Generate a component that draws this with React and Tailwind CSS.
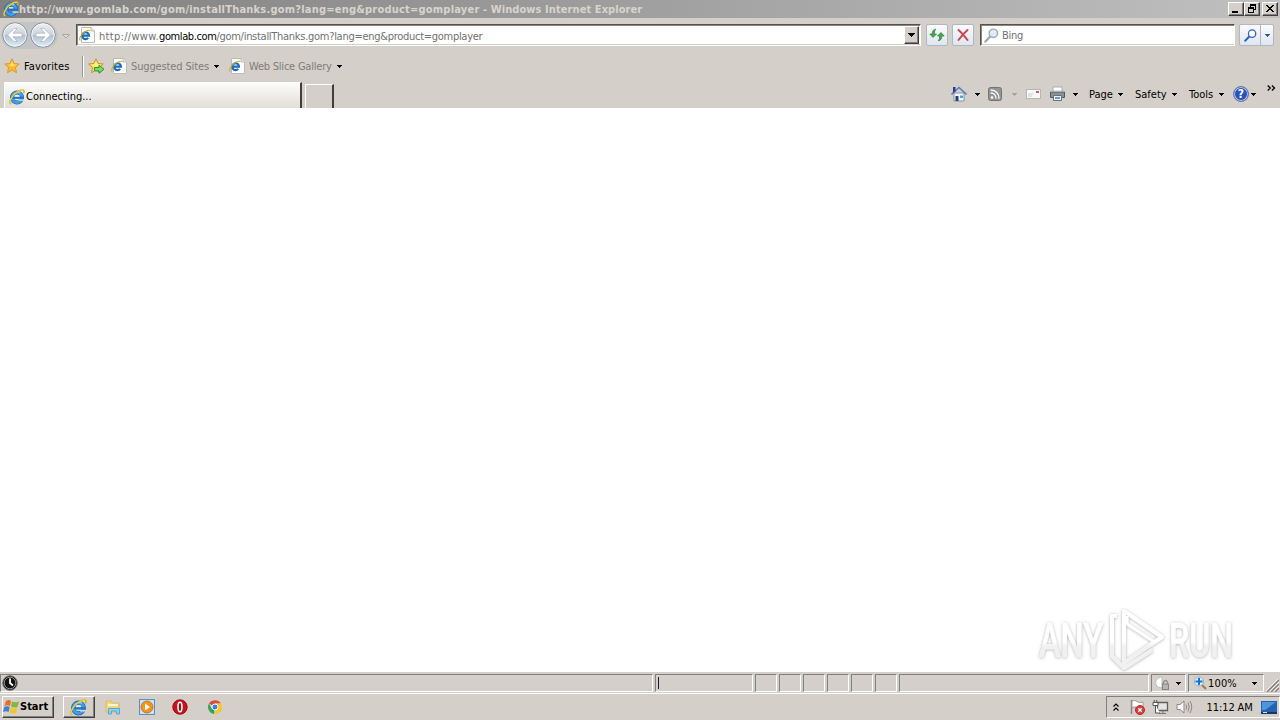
import React from "react";

const IE = ({ s = 16 }) => (
  <svg width={s} height={s} viewBox="0 0 16 16" className="block shrink-0">
    <circle cx="8" cy="8.500" r="5" fill="none" stroke="#1a5fb4" strokeWidth="4" />
    <circle cx="8" cy="8.500" r="5" fill="none" stroke="#3d9fe8" strokeWidth="2.800" />
    <path d="M9.500 10.300H15.500V11.800H9.500Z" fill="#dcd8d2" />
    <path d="M4.500 8.800H14.500" stroke="#1f74cc" strokeWidth="2.200" />
    <path d="M6 6.800H10.300" stroke="#e8f3fb" strokeWidth="1.300" />
    <path d="M4 5.500Q8 2 11.500 4" fill="none" stroke="#86cdf7" strokeWidth="1.200" />
    <path d="M2.200 15C.2 14.500 .6 11.500 2.700 8.300C5.500 4 11.500 .2 14.300 1.200C15.300 1.700 15.100 3 14.600 4.200" fill="none" stroke="#d3ae1f" strokeWidth="1.500" />
    <path d="M2.200 14.800C.5 14 .9 11.500 2.900 8.300C5.500 4.200 11.500 .6 14.300 1.500" fill="none" stroke="#f8e05a" strokeWidth=".8" />
  </svg>
);
const PageIE = () => (
  <svg width="16" height="16" viewBox="0 0 16 16" className="block shrink-0">
    <path d="M2.500.5H12L15.500 4V15.500H2.500Z" fill="#fff" stroke="#bdbbb6" />
    <path d="M12 .5V4H15.500" fill="#e6e6e6" stroke="#bdbbb6" />
    <path d="M3.500 8.600H10A3.400 3.400 0 1 0 9.200 10.900" fill="none" stroke="#1b6cc0" strokeWidth="2.100" />
    <path d="M1.300 13.500C-.4 12 2 8 4.500 5.800C7 3.500 10.500 2.500 11.200 3.800" fill="none" stroke="#cfae22" strokeWidth="1.100" />
  </svg>
);
const Caret = ({ c = "#000" }) => (
  <svg width="5" height="3" viewBox="0 0 5 3" className="block shrink-0" shapeRendering="crispEdges"><path d="M0 0H5V1H4V2H3V3H2V2H1V1H0Z" fill={c} /></svg>
);
const Star = ({ add }) => (
  <svg width="17" height="16" viewBox="0 0 17 16" className="block shrink-0">
    <path d="M8 .8 10.100 5.500 15.300 6 11.400 9.500 12.500 14.700 8 12 3.500 14.700 4.600 9.500.7 6 5.900 5.500Z" fill={add ? "#ffe45c" : "#fdbb2a"} stroke={add ? "#c8951c" : "#dd9a2e"} strokeWidth="1" />
    <path d="M8 3 9.300 6.400 13 6.800 8 8.500 4 6.800 6.800 6.400Z" fill="#fff0a0" opacity=".7" />
    {add && <path d="M6.500 9.500H11V7.200L16 11.200 11 15.200V12.900H6.500Z" fill="#7ed96c" stroke="#2f9336" />}
  </svg>
);
const Nav = ({ back, id }) => (
  <svg width="26" height="26" viewBox="0 0 26 26" className="block shrink-0">
    <defs><linearGradient id={id} x1="0" y1="0" x2="0" y2="1"><stop offset="0" stopColor="#eef0f3" /><stop offset=".48" stopColor="#ccd3dd" /><stop offset=".52" stopColor="#b2bfd0" /><stop offset="1" stopColor="#dff1fb" /></linearGradient></defs>
    <circle cx="13" cy="13" r="12.200" fill={`url(#${id})`} stroke="#858e9a" />
    <circle cx="13" cy="13" r="11.200" fill="none" stroke="#f4f7fa" />
    <path transform={back ? undefined : "matrix(-1 0 0 1 26 0)"} d="M5.500 13 12 6.500H15.300L11 11.200H20V14.800H11L15.300 19.500H12Z" fill="#fff" stroke="#9aa7b8" strokeWidth=".6" />
  </svg>
);
const Magnifier = ({ s, c, f }) => (
  <svg width={s} height={s} viewBox="0 0 16 16" className="block shrink-0">
    <path d="M1.500 14.500 6.500 9.200" stroke={c} strokeWidth="2.400" strokeLinecap="round" />
    <circle cx="10" cy="5.700" r="4.500" fill={f} stroke={c} strokeWidth="1.500" />
  </svg>
);

const RAISED = "border border-t-white border-l-white border-r-[#404040] border-b-[#404040] bg-[#d4cfc8] shadow-[inset_-1px_-1px_0_#808080]";
const SUNK = "border border-t-[#808080] border-l-[#808080] border-r-white border-b-white";
const FLAT = "border border-[#b0b7c2] rounded-[2px] bg-gradient-to-b from-[#fafbfd] to-[#dfe6f0]";

const WinButton = ({ children, className = "" }) => (
  <div className={`h-[14px] w-4 shrink-0 ${RAISED} ${className}`}>
    <svg width="14" height="12" viewBox="0 0 14 12" className="block" shapeRendering="crispEdges">{children}</svg>
  </div>
);

const TitleBar = () => (
  <div className="flex h-[18px] items-center bg-gradient-to-r from-[#808080] to-[#c0c0c0] pl-[3px]">
    <IE />
    <span className="w-[1209px] pt-px text-[11px] leading-[18px] font-bold text-[#d8d4cd]"><span className="tracking-[0.21px]">http://www.gomlab.com/gom/installThanks.gom?lang=eng&amp;product=gomplayer</span><span className="tracking-[0.08px]"> - Windows Internet Explorer</span></span>
    <WinButton><path d="M3 8H9V10H3Z" /></WinButton>
    <WinButton><path d="M5 1H11V7H9V6H10V3H6V4H5ZM3 4H9V10H3ZM4 6V9H8V6Z" fillRule="evenodd" /></WinButton>
    <WinButton className="ml-[2px]"><path d="M3 2H5V3H6V4H8V3H9V2H11V3H10V4H9V5H8V6H9V7H10V8H11V9H9V8H8V7H6V8H5V9H3V8H4V7H5V6H6V5H5V4H4V3H3Z" /></WinButton>
  </div>
);

const AddressRow = () => (
  <div className="flex h-[32px] items-start pt-[4px]">
    <div className="ml-[1px] flex h-[27px] w-[57px] gap-[2px] rounded-full bg-[#c2c4c6] pl-[1px]">
      <Nav back id="navback" /><Nav id="navforward" />
    </div>
    <div className="ml-1 mt-3 w-[14px]"><svg className="block" width="8" height="5" viewBox="0 0 8 5"><path d="M.5.5H7.500L4 4Z" fill="#dedbd5" stroke="#aaa69f" /></svg></div>
    <div className="mt-[2px] flex h-[22px] w-[845px] items-center border border-t-[#55524e] border-l-[#55524e] border-r-white border-b-white bg-white pl-[2px] shadow-[inset_1px_1px_0_#8b8780,inset_0_-1px_0_#d4cfc8]">
      <PageIE />
      <span className="ml-[4px] w-[805px] pt-[3px] text-[11px] leading-[18px] tracking-[-0.28px] text-[#707070]"><span className="tracking-[0.3px]">http://www.</span><span className="tracking-[-0.4px] text-black">gomlab.com</span>/gom/installThanks.gom?lang=eng&amp;product=gomplayer</span>
      <div className={`flex h-[18px] w-[15px] shrink-0 items-center justify-center ${RAISED}`}><svg width="7" height="4" shapeRendering="crispEdges"><path d="M0 0H7V1H6V2H5V3H4V4H3V3H2V2H1V1H0Z" /></svg></div>
    </div>
    <div className={`ml-[5px] mt-[2px] flex h-[22px] w-[22px] items-center justify-center ${FLAT}`}>
      <svg width="16" height="16" viewBox="0 0 16 16"><path d="M6.800 2.200Q5.300 3.200 5.300 7H7.500L4 10.500.8 7H3.200Q3.200 2.500 6.800 2.200Z" fill="#49a64c" stroke="#2c8133" strokeWidth=".7" /><path d="M9.200 13.800Q10.700 12.800 10.700 9H8.500L12 5.500 15.200 9H12.800Q12.800 13.500 9.200 13.800Z" fill="#49a64c" stroke="#2c8133" strokeWidth=".7" /></svg>
    </div>
    <div className={`ml-[4px] mt-[2px] flex h-[22px] w-[22px] items-center justify-center ${FLAT}`}>
      <svg width="14" height="14" viewBox="0 0 14 14"><path d="M2.500 2Q6 5 11.500 12M11.500 2Q7 6 2.500 12" fill="none" stroke="#c9474d" strokeWidth="2" strokeLinecap="round" /></svg>
    </div>
    <div className="ml-[6px] mt-[2px] flex h-[22px] w-[255px] items-center border border-t-[#55524e] border-l-[#55524e] border-r-white border-b-white bg-white pl-[3px] shadow-[inset_1px_1px_0_#8b8780,inset_0_-1px_0_#d4cfc8]">
      <Magnifier s={15} c="#9eabb7" f="#ddecf6" />
      <span className="ml-[3px] pt-[3px] text-[11px] tracking-[-0.3px] text-[#707070]">Bing</span>
    </div>
    <div className={`ml-[4px] mt-[2px] flex h-[22px] w-[35px] ${FLAT}`}>
      <div className="flex w-[21px] items-center justify-center border-r border-[#b0b7c2]"><Magnifier s={13} c="#2a62cf" f="#fff" /></div>
      <div className="flex flex-1 items-center justify-center"><Caret c="#285aad" /></div>
    </div>
  </div>
);

const FavoritesRow = () => (
  <div className="flex h-8 items-center pl-[4px] text-[11px]">
    <Star />
    <span className="ml-[3px] w-[58px] pt-[3px] tracking-[0.1px] text-black">Favorites</span>
    <div className="mr-[4px] h-[21px] w-[2px] border-l border-[#99958f] border-r border-r-white" />
    <Star add />
    <div className="ml-[6px]"><PageIE /></div>
    <span className="ml-[4px] w-[83px] pt-[3px] tracking-[-0.13px] text-[#807d79]">Suggested Sites</span><Caret />
    <div className="ml-[10px]"><PageIE /></div>
    <span className="ml-[4px] w-[88px] pt-[3px] tracking-[-0.22px] text-[#807d79]">Web Slice Gallery</span><Caret />
  </div>
);

const Tool = ({ label, w }) => (
  <div className="flex items-center"><span className={`pt-[3px] text-[11px] text-black ${w}`}>{label}</span><Caret /></div>
);

const TabRow = () => (
  <div className="flex h-[26px] items-start">
    <div className="ml-[4px] flex h-[26px] w-[298px] items-center border-t border-l border-white border-r-2 border-r-[#403d3a] bg-gradient-to-b from-[#fcfcfb] to-[#e2ded8] pl-[4px] pt-[2px]">
      <IE s={16} /><span className="ml-[1px] pt-[2px] text-[11px] text-black">Connecting...</span>
    </div>
    <div className="ml-[3px] mt-[2px] h-6 w-[29px] border-t border-l border-t-white border-l-white border-r-2 border-r-[#403d3a]" />
    <div className="ml-[617px] flex h-6 items-center">
      <svg width="16" height="16" viewBox="0 0 16 16"><path d="M3 7H13V15H3Z" fill="#f0f6fc" stroke="#8294ac" /><path d="M.5 8.500 8 1.500 15.500 8.500" fill="none" stroke="#5d7dbb" strokeWidth="1.600" /><path d="M2 1H4.500V5L2 7Z" fill="#273c94" /><path d="M4.500 10H7.500V15H4.500Z" fill="#243f77" /><path d="M9 9.500H12V12H9Z" fill="#4da2d7" /></svg>
      <div className="ml-[8px]"><Caret /></div>
      <svg className="ml-[8px]" width="14" height="14" viewBox="0 0 14 14"><rect x=".5" y=".5" width="13" height="13" rx="2" fill="#939393" stroke="#747474" /><circle cx="4" cy="10.500" r="1.300" fill="#fff" /><path d="M2.700 6A5 5 0 0 1 8 11.700M2.700 3A8 8 0 0 1 11 11.700" fill="none" stroke="#fff" strokeWidth="1.300" /></svg>
      <div className="ml-[10px]"><Caret c="#a7a29b" /></div>
      <svg className="ml-[9px]" width="15" height="12" viewBox="0 0 15 12"><rect x=".5" y="1.500" width="14" height="9" fill="#f8f8f8" stroke="#b8b5b3" /><path d="M2 6H7M2 8H6" stroke="#ccc" /><path d="M10 3H13V5H10Z" fill="#d65860" /></svg>
      <svg className="ml-[8px]" width="17" height="16" viewBox="0 0 17 16"><path d="M4 1H13V7H4Z" fill="#fff" stroke="#a7adb5" /><path d="M1.500 6H15.500V11.500H1.500Z" fill="#8b9096" stroke="#555a61" /><path d="M2 5H15" stroke="#b7bdc5" /><path d="M4.500 9.500H12.500V14.500H4.500Z" fill="#ecf4fb" stroke="#65717e" /><path d="M6 12H11" stroke="#6b98cc" strokeWidth="2" /></svg>
      <div className="ml-[7px]"><Caret /></div>
      <div className="ml-[11px]"><Tool label="Page" w="w-[29px]" /></div>
      <div className="ml-[12px]"><Tool label="Safety" w="w-[37px]" /></div>
      <div className="ml-[12px]"><Tool label="Tools" w="w-[30px]" /></div>
      <div className="ml-[9px] flex h-4 w-4 items-center justify-center rounded-full border border-[#6c7eaa] bg-[#2a51b8] text-[12px] font-bold text-white shadow-[inset_0_0_0_1px_#b9c9ed]">?</div>
      <div className="ml-[2px]"><Caret /></div>
    </div>
    <svg className="ml-[11px] mt-[3px]" width="9" height="6" viewBox="0 0 9 6"><path d="M.7.5 3.300 3 .7 5.500M4.900.5 7.500 3 4.900 5.500" fill="none" stroke="#000" strokeWidth="1.300" /></svg>
  </div>
);

const Watermark = () => (
  <svg width="212" height="68" viewBox="-6 0 212 68" className="mr-[37px] block overflow-visible">
    <defs><filter id="soft" x="-5%" y="-5%" width="110%" height="115%"><feDropShadow dx="0" dy="0.500" stdDeviation="1.500" floodColor="#666" floodOpacity=".55" /></filter>
      <linearGradient id="fade" gradientUnits="userSpaceOnUse" x1="0" y1="0" x2="0" y2="68"><stop offset=".55" stopColor="#fff" /><stop offset=".62" stopColor="#f1f1f1" /></linearGradient></defs>
    <g filter="url(#soft)">
      <g fill="url(#fade)" stroke="url(#fade)" strokeWidth=".4" fontFamily="Roboto, sans-serif" fontSize="48" fontWeight="500">
        <text x="2" y="53" textLength="64" lengthAdjust="spacingAndGlyphs">ANY</text>
        <text x="132" y="53" textLength="64" lengthAdjust="spacingAndGlyphs">RUN</text>
      </g>
      <path d="M87 7 125 33 87 59ZM80 12H75V52L87 64 115 46" fill="none" stroke="url(#fade)" strokeWidth="4" strokeLinejoin="round" />
      <path d="M90 12V20L116 37" fill="none" stroke="url(#fade)" strokeWidth="3" />
    </g>
  </svg>
);

const StatusBar = () => (
  <div className="flex h-[21px] items-start gap-[2px] border-t border-[#d4cfc8] pt-[1px] text-[11px]">
    <div className={`flex h-[18px] w-[653px] items-center pl-[1px] ${SUNK}`}>
      <svg width="16" height="16" viewBox="0 0 16 16"><circle cx="8" cy="8" r="7.300" fill="#111" stroke="#777" /><circle cx="8" cy="8" r="5.800" fill="none" stroke="#c5c5c5" strokeWidth=".7" /><path d="M8 3.500V8L11 10.500" fill="none" stroke="#fff" strokeWidth="1.800" /></svg>
    </div>
    <div className={`h-[18px] w-[98px] py-[2px] pl-[2px] ${SUNK}`}><div className="h-3 w-px bg-[#15204a]" /></div>
    {[0, 1, 2, 3, 4, 5].map((i) => <div key={i} className={`h-[18px] w-[22px] ${SUNK}`} />)}
    <div className={`h-[18px] w-[250px] ${SUNK}`} />
    <div className={`flex h-[18px] w-[35px] items-center pl-[3px] ${SUNK}`}>
      <svg width="16" height="16" viewBox="0 0 16 16"><path d="M1 10A6 6 0 0 1 7 2V13Q3 13 1 10" fill="#fff" stroke="#bbb" /><path d="M8.500 9V7Q10.500 4 12.500 7V9" fill="none" stroke="#8b8b8b" strokeWidth="1.300" /><rect x="7.500" y="9" width="6" height="5.500" fill="#b5b5b5" stroke="#858585" /></svg>
      <div className="ml-[5px]"><Caret /></div>
    </div>
    <div className={`flex h-[18px] w-[76px] items-center pl-[4px] ${SUNK}`}>
      <svg width="15" height="15" viewBox="0 0 15 15"><path d="M9 9 13 13" stroke="#a77749" strokeWidth="2" /><circle cx="6" cy="5.500" r="4.500" fill="#e5f2fc" stroke="#8aaed0" /><path d="M2.500 5.500H9.500M6 2V9" stroke="#1d6fd0" strokeWidth="2" /></svg>
      <span className="w-[44px] pt-[3px] tracking-[0.15px] text-black">100%</span><Caret />
    </div>
    <svg className="mt-[5px]" width="13" height="13" viewBox="0 0 13 13"><path d="M1 13 13 1M5 13 13 5M9 13 13 9" stroke="#85817b" strokeWidth="1.400" /><path d="M0 12 12 0M4 12 13 3M8 12 13 7" stroke="#fff" strokeWidth=".8" /></svg>
  </div>
);

const Taskbar = () => (
  <div className="flex h-[27px] items-start border-t border-white pt-[2px]">
    <div className={`ml-[2px] flex h-[22px] w-[52px] items-center ${RAISED}`}>
      <svg className="shrink-0" width="17" height="16" viewBox="0 0 17 16"><path d="M3 2Q6 0 8 2L7 7Q4 5.500 1.500 7Z" fill="#ea6b2c" /><path d="M9 2.500Q12 4 16 2.500L14.500 8Q11 9 8 7.500Z" fill="#83b83e" /><path d="M1.300 8Q4 6.500 6.700 8L5.500 13Q3 11.500 0 13Z" fill="#3f7ed3" /><path d="M7.700 8.500Q11 10 14.300 9L13 14Q10 15.500 6.500 13.500Z" fill="#f5c42d" /></svg>
      <span className="text-[11px] font-bold text-black">Start</span>
    </div>
    <div className={`ml-[9px] flex h-[22px] w-8 items-center justify-center ${RAISED}`}><IE s={17} /></div>
    <svg className="ml-[10px] mt-[3px]" width="16" height="16" viewBox="0 0 16 16"><path d="M1 2H6L7 4H14V13H1Z" fill="#f3d778" stroke="#d3bb74" /><path d="M3 5H13V7H3Z" fill="#fff7cb" /><path d="M3.500 15V9.500H14.500V15H11.500V12H6.500V15Z" fill="#8fd0f0" stroke="#5aa6d3" /></svg>
    <svg className="ml-[18px] mt-[3px]" width="16" height="16" viewBox="0 0 16 16"><rect x=".5" y=".5" width="15" height="15" fill="#cde3f6" stroke="#548fc8" /><circle cx="8" cy="8" r="6" fill="#f49322" stroke="#c8761e" /><path d="M6 4.500 11 8 6 11.500Z" fill="#fff" /></svg>
    <svg className="ml-[17px] mt-[3px]" width="16" height="16" viewBox="0 0 16 16"><circle cx="8" cy="8" r="7.500" fill="#c5121d" /><circle cx="8" cy="8" r="7.200" fill="none" stroke="#8d0a14" strokeWidth=".7" /><ellipse cx="8" cy="8" rx="2" ry="4.700" fill="#a50d17" stroke="#fff" strokeWidth="1.600" /></svg>
    <svg className="ml-[20px] mt-[4px]" width="14" height="14" viewBox="0 0 14 14"><path d="M7 7 1 3.500A7 7 0 0 1 13 3.500H7Z" fill="#de4b3b" /><path d="M7 7 6 14A7 7 0 0 1 1 3.500L4 9Z" fill="#34a455" /><path d="M7 3.500H13A7 7 0 0 1 6 14L10 8Z" fill="#fbc628" /><circle cx="7" cy="7" r="3" fill="#427fed" stroke="#fff" /></svg>
    <div className={`ml-[884px] flex h-[22px] w-[175px] items-center pl-[6px] ${SUNK}`}>
      <svg width="6" height="9" viewBox="0 0 6 9"><path d="M.5 3.500 3 1 5.500 3.500M.5 7.500 3 5 5.500 7.500" fill="none" stroke="#000" strokeWidth="1.200" /></svg>
      <svg className="ml-[10px]" width="16" height="16" viewBox="0 0 16 16"><path d="M2.500 1V15" stroke="#858585" strokeWidth="1.400" /><path d="M3 2Q6 .5 8 2.500T14 3V9Q11 10 8 8.500T3 9Z" fill="#fff" stroke="#999" /><circle cx="11" cy="11" r="4.500" fill="#d9403e" stroke="#b32c2a" /><path d="M9.300 9.300 12.700 12.700M12.700 9.300 9.300 12.700" stroke="#fff" strokeWidth="1.300" /></svg>
      <svg className="ml-[7px]" width="17" height="16" viewBox="0 0 17 16"><path d="M5.500 3.500H15.500V11.500H5.500Z" fill="#e4e5e4" stroke="#5f5f5f" strokeWidth="1.300" /><path d="M7 14.500H14M11 12V14" stroke="#777" /><path d="M1 3.500H6V6.500H1ZM2.200 1V4M4.700 1V4M3.500 6V14H8" fill="#fff" stroke="#555" /></svg>
      <svg className="ml-[7px]" width="17" height="16" viewBox="0 0 17 16"><path d="M1 5.500H4L8 2V14L4 10.500H1Z" fill="#f7f7f7" stroke="#888" /><path d="M10 5.500Q11.500 8 10 10.500M12 3.500Q14.500 8 12 12.500M14 2Q17.500 8 14 14" fill="none" stroke="#8a8a8a" /></svg>
      <span className="ml-[14px] w-[54px] pt-[2px] text-[11px] tracking-[-0.1px] text-black">11:12 AM</span>
      <svg width="16" height="13" viewBox="0 0 16 13"><path d="M0 0H16V11H0Z" fill="#2463b1" /><path d="M1 1H15L4 9H1Z" fill="#4e95dc" /><path d="M0 11H16V13H0Z" fill="#1c355d" /><path d="M2 11.500H6" stroke="#d7e6f5" /></svg>
    </div>
  </div>
);

export default function App() {
  return (
    <div className="flex h-[720px] w-[1280px] flex-col overflow-hidden bg-[#d4cfc8] font-['DejaVu_Sans_Condensed','DejaVu_Sans',sans-serif] whitespace-nowrap">
      <TitleBar />
      <AddressRow />
      <FavoritesRow />
      <TabRow />
      <main className="flex h-[564px] items-end justify-end bg-white"><Watermark /></main>
      <StatusBar />
      <Taskbar />
    </div>
  );
}
